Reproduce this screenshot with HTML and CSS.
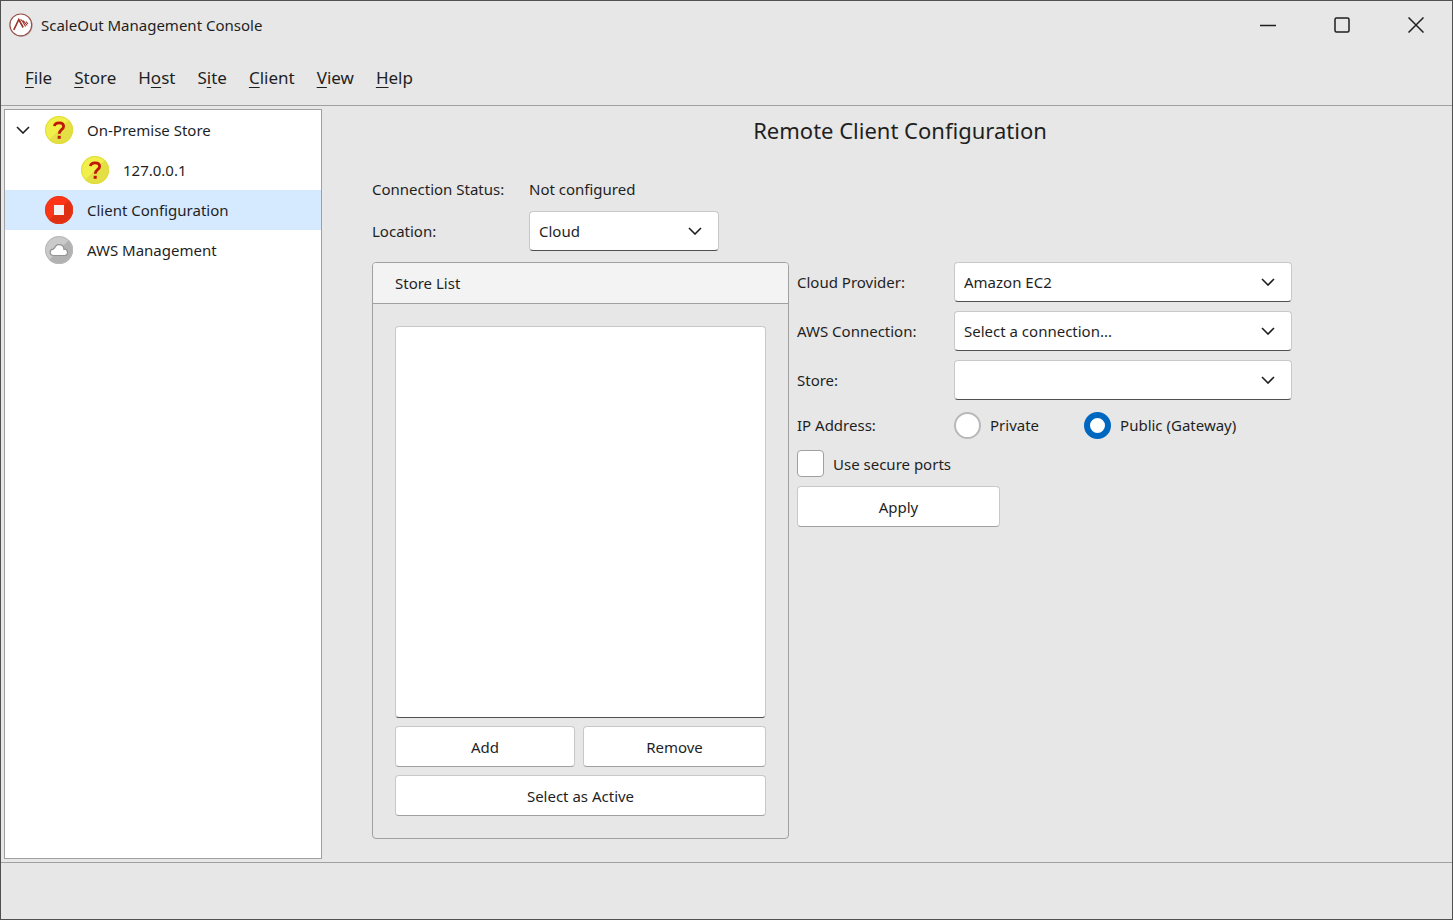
FILE: index.html
```
<!DOCTYPE html>
<html lang="en">

<head>
  <meta charset="UTF-8">
  <meta name="viewport" content="width=device-width, initial-scale=1.0">
  <title>ScaleOut Management Console</title>
  <link rel="stylesheet" href="styles.css">
</head>

<body>

  <header class="titlebar">
    <svg class="app-logo" viewBox="0 0 24 24" width="24" height="24">
      <circle cx="12.6" cy="12.8" r="11" fill="#bbb"/>
      <circle cx="11.8" cy="11.9" r="10.9" fill="#fff" stroke="#9a4f49" stroke-width="1.2"/>
      <path d="M4.800 16.800L9.800 6.500L14.200 14.500" fill="none" stroke="#9c332b" stroke-width="1.600"/>
      <path d="M11.500 6.500L13.500 8.200L16.600 13.500M14.200 7.500L18.200 12.500M17 8.500L19 11" fill="none" stroke="#9c332b" stroke-width="1.100"/>
    </svg>
    <span class="app-name">ScaleOut Management Console</span>
    <div class="window-buttons">
      <button type="button" aria-label="Minimize">
        <svg viewBox="0 0 16 16" width="16" height="16"><path d="M0 8.500h16"/></svg>
      </button>
      <button type="button" aria-label="Maximize">
        <svg viewBox="0 0 16 16" width="16" height="16"><rect x="1" y="1" width="14" height="14" rx="1.5"/></svg>
      </button>
      <button type="button" aria-label="Close">
        <svg viewBox="0 0 16 16" width="16" height="16"><path d="M.5.5l15 15M15.500.5l-15 15"/></svg>
      </button>
    </div>
  </header>

  <nav class="menubar">
    <a href="#"><u>F</u>ile</a>
    <a href="#"><u>S</u>tore</a>
    <a href="#">H<u>o</u>st</a>
    <a href="#">S<u>i</u>te</a>
    <a href="#"><u>C</u>lient</a>
    <a href="#"><u>V</u>iew</a>
    <a href="#"><u>H</u>elp</a>
  </nav>

  <div class="workspace">
    <aside class="sidebar">
      <ul class="tree">
        <li class="tree-item">
          <svg class="chevron" viewBox="0 0 14 8" width="14" height="8"><path d="M1 1l6 6 6-6"/></svg>
          <svg class="status-icon" viewBox="0 0 28 28" width="28" height="28">
            <circle cx="14" cy="14" r="14" fill="#f1f04a"/>
            <path d="M23.900 4.100A14 14 0 0 1 4.100 23.900z" fill="#e3df45"/>
            <circle cx="14" cy="14" r="13.500" fill="none" stroke="#dedb3c"/>
            <path d="M9.500 10.200C9.900 5.900 18.600 5.800 18.600 10.400C18.600 13.500 14.200 13.700 14.200 17.800" fill="none" stroke="#c11507" stroke-width="2.800"/>
            <rect x="12.700" y="19.800" width="3" height="3" fill="#c11507"/>
          </svg>
          <span>On-Premise Store</span>
        </li>
        <li class="tree-item child">
          <svg class="status-icon" viewBox="0 0 28 28" width="28" height="28">
            <circle cx="14" cy="14" r="14" fill="#f1f04a"/>
            <path d="M23.900 4.100A14 14 0 0 1 4.100 23.900z" fill="#e3df45"/>
            <circle cx="14" cy="14" r="13.500" fill="none" stroke="#dedb3c"/>
            <path d="M9.500 10.200C9.900 5.900 18.600 5.800 18.600 10.400C18.600 13.500 14.200 13.700 14.200 17.800" fill="none" stroke="#c11507" stroke-width="2.800"/>
            <rect x="12.700" y="19.800" width="3" height="3" fill="#c11507"/>
          </svg>
          <span>127.0.0.1</span>
        </li>
        <li class="tree-item selected">
          <svg class="status-icon" viewBox="0 0 28 28" width="28" height="28">
            <circle cx="14" cy="14" r="14" fill="#ff3517"/>
            <path d="M23.900 4.100A14 14 0 0 1 4.100 23.900z" fill="#e03014"/>
            <circle cx="14" cy="14" r="13.500" fill="none" stroke="#e63a1c"/>
            <rect x="9" y="9" width="10" height="10" fill="#f2f2f2"/>
          </svg>
          <span>Client Configuration</span>
        </li>
        <li class="tree-item">
          <svg class="status-icon" viewBox="0 0 28 28" width="28" height="28">
            <circle cx="14" cy="14" r="14" fill="#cacaca"/>
            <path d="M23.900 4.100A14 14 0 0 1 4.100 23.900z" fill="#b1b1b1"/>
            <circle cx="14" cy="14" r="13.500" fill="none" stroke="#b9b9b9"/>
            <path d="M8.500 19.500a3.200 3.200 0 0 1-.3-6.400 3 3 0 0 1 1.500-1.200 4.700 4.700 0 0 1 9.200 1.400 3.100 3.100 0 0 1 .9 6.200z" fill="#fff" stroke="#939393" stroke-width="1.200"/>
          </svg>
          <span>AWS Management</span>
        </li>
      </ul>
    </aside>

    <main class="content">
      <h1>Remote Client Configuration</h1>

      <div class="field status-row">
        <span>Connection Status:</span>
        <span>Not configured</span>
      </div>
      <div class="field location-row">
        <label for="location">Location:</label>
        <div class="select">
          <select id="location">
            <option>Cloud</option>
          </select>
          <svg class="chevron" viewBox="0 0 14 8" width="14" height="8"><path d="M1 1l6 6 6-6"/></svg>
        </div>
      </div>

      <div class="columns">
        <section class="panel">
          <h2 id="store-list-title">Store List</h2>
          <div class="panel-body">
            <select class="store-list" size="10" aria-labelledby="store-list-title"></select>
            <div class="panel-buttons">
              <button type="button" class="btn">Add</button>
              <button type="button" class="btn">Remove</button>
            </div>
            <button type="button" class="btn">Select as Active</button>
          </div>
        </section>

        <form class="store-form">
          <div class="field">
            <label for="provider">Cloud Provider:</label>
            <div class="select">
              <select id="provider">
                <option>Amazon EC2</option>
              </select>
              <svg class="chevron" viewBox="0 0 14 8" width="14" height="8"><path d="M1 1l6 6 6-6"/></svg>
            </div>
          </div>
          <div class="field">
            <label for="connection">AWS Connection:</label>
            <div class="select">
              <select id="connection">
                <option>Select a connection...</option>
              </select>
              <svg class="chevron" viewBox="0 0 14 8" width="14" height="8"><path d="M1 1l6 6 6-6"/></svg>
            </div>
          </div>
          <div class="field">
            <label for="store">Store:</label>
            <div class="select">
              <select id="store">
                <option></option>
              </select>
              <svg class="chevron" viewBox="0 0 14 8" width="14" height="8"><path d="M1 1l6 6 6-6"/></svg>
            </div>
          </div>
          <div class="field">
            <span>IP Address:</span>
            <div class="radios">
              <label class="choice"><input type="radio" name="ip"> Private</label>
              <label class="choice"><input type="radio" name="ip" checked> Public (Gateway)</label>
            </div>
          </div>
          <label class="choice"><input type="checkbox"> Use secure ports</label>
          <button type="button" class="btn apply">Apply</button>
        </form>
      </div>
    </main>
  </div>

  <footer class="statusbar"></footer>

</body>

</html>
```

FILE: styles.css
```
* {
  box-sizing: border-box;
}
body {
  margin: 0;
  min-height: 100vh;
  display: flex;
  flex-direction: column;
  border: 1px solid #505050;
  background-color: #e7e7e7;
  color: #1f1f1f;
  font-family: "Noto Sans", "Open Sans", sans-serif;
  font-size: 15px;
  line-height: 20px;
}
button, select, input {
  font: inherit;
  color: inherit;
  margin: 0;
}

/* window chrome */
.titlebar {
  display: flex;
  align-items: center;
  height: 48px;
  padding-left: 8px;
}
.app-logo {
  margin-right: 8px;
}
.window-buttons {
  display: flex;
  gap: 2px;
  margin-left: auto;
}
.window-buttons button {
  display: flex;
  align-items: center;
  justify-content: center;
  width: 72px;
  height: 48px;
  padding: 0;
  border: none;
  background: none;
}
.window-buttons svg {
  fill: none;
  stroke: #1f1f1f;
  stroke-width: 1.5;
}
.menubar {
  display: flex;
  align-items: center;
  gap: 22px;
  height: 57px;
  padding: 1px 24px 0;
  border-bottom: 1px solid #a0a0a0;
  font-size: 17px;
}
.menubar a {
  color: inherit;
  text-decoration: none;
}
.menubar u {
  text-underline-offset: 3px;
  text-decoration-thickness: 1px;
}
.workspace {
  display: flex;
  flex: 1;
}
.statusbar {
  height: 57px;
  border-top: 1px solid #a0a0a0;
}
.chevron {
  fill: none;
  stroke: #1f1f1f;
  stroke-width: 1.6;
}

/* tree */
.sidebar {
  width: 318px;
  margin: 3px 0 3px 3px;
  background-color: #fff;
  border: 1px solid #a0a0a0;
}
.tree {
  margin: 0;
  padding: 0;
  list-style: none;
}
.tree-item {
  display: flex;
  align-items: center;
  height: 40px;
  padding-left: 40px;
}
.tree-item .chevron {
  margin-left: -29px;
  margin-right: 15px;
}
.tree-item.child {
  padding-left: 76px;
}
.tree-item.selected {
  background-color: #d6eaff;
}
.status-icon {
  margin-right: 14px;
}

/* content */
.content {
  flex: 1;
  display: flex;
  flex-direction: column;
  padding: 8px 24px 23px 50px;
}
h1 {
  margin: 0;
  font-size: 22px;
  font-weight: normal;
  line-height: 32px;
  text-align: center;
}
.field {
  display: flex;
  align-items: center;
}
.field > :first-child {
  width: 157px;
}
.status-row {
  height: 20px;
  margin-top: 33px;
}
.location-row {
  margin: 12px 0 11px;
}
.location-row .select {
  width: 190px;
}
.select {
  display: grid;
  align-items: center;
  width: 338px;
}
.select select {
  appearance: none;
  grid-area: 1 / 1;
  height: 40px;
  padding: 0 40px 0 9px;
  border: 1px solid #c8c8c8;
  border-bottom-color: #505050;
  border-radius: 4px;
  background-color: #fff;
}
.select .chevron {
  grid-area: 1 / 1;
  justify-self: end;
  margin-right: 17px;
  pointer-events: none;
}
.columns {
  display: flex;
  flex: 1;
  gap: 8px;
}
.panel {
  display: flex;
  flex-direction: column;
  width: 417px;
  border: 1px solid #a0a0a0;
  border-radius: 4px;
}
.panel h2 {
  margin: 0;
  padding: 10px 22px;
  border-bottom: 1px solid #a0a0a0;
  border-radius: 3px 3px 0 0;
  background-color: #f3f3f3;
  font-size: 15px;
  font-weight: normal;
}
.panel-body {
  flex: 1;
  display: flex;
  flex-direction: column;
  gap: 8px;
  padding: 22px;
}
.store-list {
  flex: 1;
  border: 1px solid #c8c8c8;
  border-bottom-color: #505050;
  border-radius: 4px;
  background-color: #fff;
}
.panel-buttons {
  display: grid;
  grid-template-columns: 180px 1fr;
  gap: 8px;
}
.btn {
  height: 41px;
  border: 1px solid #c8c8c8;
  border-bottom-color: #a0a0a0;
  border-radius: 4px;
  background-color: #fff;
}
.store-form {
  display: flex;
  flex-direction: column;
  gap: 9px;
}
.store-form .field {
  min-height: 32px;
}
.radios {
  display: flex;
  gap: 45px;
}
.choice {
  display: flex;
  align-items: center;
  gap: 9px;
}
.choice input {
  appearance: none;
  width: 27px;
  height: 27px;
  border: 1px solid #a0a0a0;
  border-radius: 4px;
  background-color: #fff;
}
.choice input[type="radio"] {
  border-width: 2px;
  border-color: #b8b8b8;
  border-radius: 50%;
}
.choice input[type="radio"]:checked {
  border: 6px solid #0067c0;
}
.apply {
  width: 203px;
}
```
